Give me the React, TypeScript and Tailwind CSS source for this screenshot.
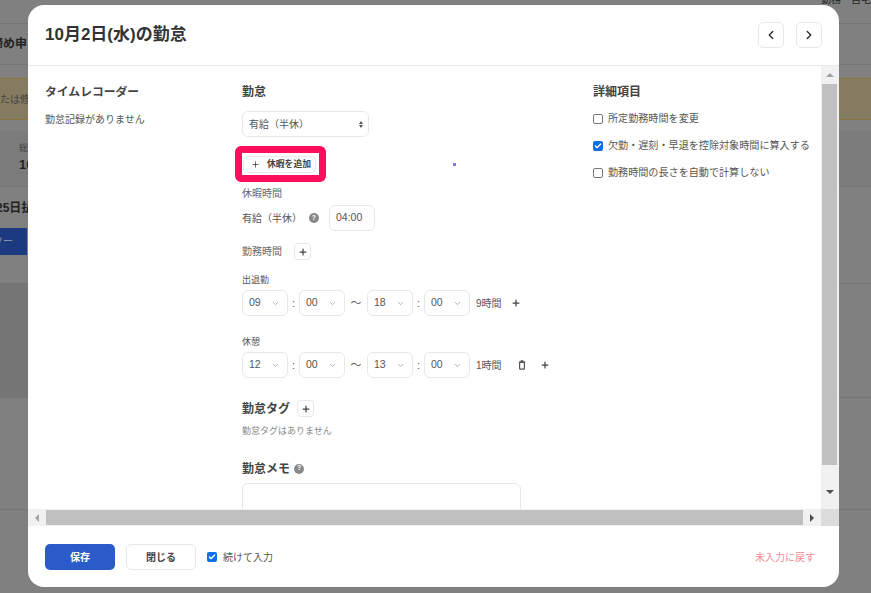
import { ChevronDown, ChevronLeft, ChevronRight, Plus, Check } from 'lucide-react';

const font = "font-['Liberation_Sans','Noto_Sans_CJK_JP',sans-serif]";

function TimeSelect({ value }: { value: string }) {
  return (
    <div className="flex h-[26px] w-[46px] items-center justify-between rounded-[6px] border border-[#e8e8e8] bg-white pl-[6px] pr-[7px] text-[10.5px] text-[#555]">
      <span>{value}</span>
      <ChevronDown size={9} strokeWidth={2} className="text-[#999]" />
    </div>
  );
}

function TrashIcon() {
  return (
    <svg width="10" height="10" viewBox="0 0 10 10" fill="none" stroke="#555" strokeWidth="1.2" className="ml-[15px]">
      <path d="M3.6 .8h2.8M1.8 2.2h6.4" />
      <rect x="2.6" y="2.4" width="4.8" height="6.8" rx=".6" />
    </svg>
  );
}

function TimeRow({ from, to, total, trash }: { from: string; to: string; total: string; trash?: boolean }) {
  return (
    <div className="flex h-[26px] items-center">
      <TimeSelect value={from} />
      <span className="w-[11px] text-center text-[11px] text-[#555]">:</span>
      <TimeSelect value="00" />
      <span className="w-[22px] text-center text-[11px] text-[#555]">〜</span>
      <TimeSelect value={to} />
      <span className="w-[11px] text-center text-[11px] text-[#555]">:</span>
      <TimeSelect value="00" />
      <span className="ml-[6px] text-[10px] text-[#555]">{total}</span>
      {trash && <TrashIcon />}
      <Plus size={10} strokeWidth={3} className={trash ? 'ml-[13px] text-[#444]' : 'ml-[9px] text-[#444]'} />
    </div>
  );
}

function Help() {
  return (
    <span className="flex h-[10px] w-[10px] items-center justify-center rounded-full bg-[#888] text-[7px] font-bold text-white">?</span>
  );
}

function SmallPlus() {
  return (
    <div className="flex h-[17px] w-[17px] items-center justify-center rounded-[4px] border border-[#e8e8e8] bg-white">
      <Plus size={10} strokeWidth={3} className="text-[#444]" />
    </div>
  );
}

function CheckRow({ label, checked }: { label: string; checked?: boolean }) {
  return (
    <div className="flex h-[13px] items-center gap-[5px] text-[10.1px] text-[#555]">
      {checked ? (
        <span className="flex h-[10px] w-[10px] items-center justify-center rounded-[2px] bg-[#0b6fe8]">
          <Check size={8} strokeWidth={4} className="text-white" />
        </span>
      ) : (
        <span className="h-[10px] w-[10px] rounded-[2px] border border-[#777] bg-white" />
      )}
      <span>{label}</span>
    </div>
  );
}

export default function App() {
  return (
    <div className={`${font} relative h-[593px] w-[871px] overflow-hidden bg-[#808080]`}>
      {/* dimmed page behind the dialog */}
      <div className="flex h-full flex-col">
        <div className="flex h-[24px] justify-end border-b border-[#747474] text-[10px] text-[#222]">
          <span className="-mt-[8px] whitespace-nowrap">勤務・自宅</span>
        </div>
        <div className="flex h-[41px] items-center border-b border-[#747474] text-[12px] font-bold text-[#222]">
          <span className="-ml-[9px] whitespace-nowrap">締め申</span>
        </div>
        <div className="mt-[13px] flex h-[42px] items-center border-y border-[#8a7440] bg-[#857b60] text-[10px] text-[#444]">
          たは修
        </div>
        <div className="mt-[11px] h-[56px] border-b border-[#747474] bg-[#7b7b7b] pl-[19px] pt-[11px] text-[#222]">
          <div className="text-[9px] leading-[12px] text-[#444]">総</div>
          <div className="mt-[3px] text-[13px] font-bold leading-[16px]">10</div>
        </div>
        <div className="flex h-[41px] items-center text-[12px] font-bold text-[#222]">
          <span className="-ml-[4px] whitespace-nowrap">25日払</span>
        </div>
        <div className="flex h-[27px] w-[27px] items-center overflow-hidden bg-[#1b3a80] text-[10px] text-[#99a]">
          <span className="-ml-[7px] whitespace-nowrap">ソー</span>
        </div>
        <div className="mt-[28px] h-[115px] border-y border-[#747474]">
          <div className="h-full w-[100px] bg-[#757575]" />
        </div>
        <div className="h-[112px] border-b border-[#747474]" />
      </div>

      {/* dialog */}
      <div className="absolute left-[28px] top-[5px] flex h-[582px] w-[811px] flex-col overflow-hidden rounded-[16px] bg-white">
        <header className="flex h-[61px] shrink-0 items-center justify-between border-b border-[#e8e8e8] pb-[1px] pl-[17px] pr-[17px]">
          <h1 className="mt-[1px] text-[17px] font-bold text-[#333]">10月2日(水)の勤怠</h1>
          <div className="flex gap-[12px]">
            <button className="flex h-[26px] w-[26px] items-center justify-center rounded-[5px] border border-[#e8e8e8]">
              <ChevronLeft size={14} strokeWidth={2.5} className="text-[#333]" />
            </button>
            <button className="flex h-[26px] w-[26px] items-center justify-center rounded-[5px] border border-[#e8e8e8]">
              <ChevronRight size={14} strokeWidth={2.5} className="text-[#333]" />
            </button>
          </div>
        </header>

        <div className="relative flex min-h-0 flex-1">
          <div className="flex min-w-0 flex-1 flex-col">
            <div className="flex min-h-0 flex-1 overflow-hidden pt-[18px]">
              <section className="ml-[17px] w-[197px] shrink-0">
                <h2 className="text-[11.8px] font-bold leading-[17px] text-[#444]">タイムレコーダー</h2>
                <p className="mt-[12px] text-[10px] leading-[14px] text-[#555]">勤怠記録がありません</p>
              </section>

              <section className="w-[351px] shrink-0">
                <h2 className="text-[12px] font-bold leading-[17px] text-[#444]">勤怠</h2>
                <div className="mt-[10px] flex h-[26px] w-[127px] items-center justify-between rounded-[6px] border border-[#e8e8e8] pl-[6px] pr-[5px] text-[10px] text-[#555]">
                  <span>有給（半休）</span>
                  <span className="flex flex-col gap-[1px]">
                    <span className="h-0 w-0 border-x-[2px] border-b-[3px] border-x-transparent border-b-[#555]" />
                    <span className="h-0 w-0 border-x-[2px] border-t-[3px] border-x-transparent border-t-[#555]" />
                  </span>
                </div>

                <div className="relative mt-[19px] h-[17px]">
                  <div className="ml-[1px] flex h-[17px] w-[73px] items-center gap-[7px] rounded-[4px] border border-[#e8e8e8] pl-[7px] text-[8.8px] font-bold text-[#444]">
                    <Plus size={9} strokeWidth={2} className="text-[#333]" />
                    <span>休暇を追加</span>
                  </div>
                  <div className="absolute -left-[7px] -top-[10px] h-[36px] w-[91px] rounded-[6px] border-[7px] border-[#ff0f5b]" />
                </div>

                <p className="mt-[14px] text-[10px] leading-[14px] text-[#666]">休暇時間</p>
                <div className="mt-[4px] flex h-[26px] items-center text-[10px] text-[#555]">
                  <span className="w-[56px] whitespace-nowrap">有給（半休）</span>
                  <span className="ml-[11px]"><Help /></span>
                  <div className="ml-[10px] flex h-[26px] w-[46px] items-center rounded-[6px] border border-[#e8e8e8] pl-[6px] text-[10.5px]">04:00</div>
                </div>

                <div className="mt-[12px] flex h-[17px] items-center gap-[12px] text-[10px] text-[#666]">
                  <span>勤務時間</span>
                  <SmallPlus />
                </div>

                <p className="mt-[14px] text-[9px] leading-[13px] text-[#555]">出退勤</p>
                <div className="mt-[3px]"><TimeRow from="09" to="18" total="9時間" /></div>
                <p className="mt-[20px] text-[9px] leading-[13px] text-[#555]">休憩</p>
                <div className="mt-[3px]"><TimeRow from="12" to="13" total="1時間" trash /></div>

                <div className="mt-[22px] flex h-[17px] items-center gap-[7px] text-[12px] font-bold text-[#444]">
                  <span>勤怠タグ</span>
                  <SmallPlus />
                </div>
                <p className="mt-[8px] text-[9px] leading-[13px] text-[#888]">勤怠タグはありません</p>

                <div className="mt-[22px] flex h-[17px] items-center gap-[4px] text-[12px] font-bold text-[#444]">
                  <span>勤怠メモ</span>
                  <Help />
                </div>
                <div className="mt-[6px] h-[40px] w-[279px] rounded-[6px] border border-[#e8e8e8]" />
              </section>

              <section className="w-[230px] shrink-0">
                <h2 className="text-[12px] font-bold leading-[17px] text-[#444]">詳細項目</h2>
                <div className="mt-[11px] flex flex-col gap-[14px]">
                  <CheckRow label="所定勤務時間を変更" />
                  <CheckRow label="欠勤・遅刻・早退を控除対象時間に算入する" checked />
                  <CheckRow label="勤務時間の長さを自動で計算しない" />
                </div>
              </section>
            </div>

            {/* horizontal scrollbar */}
            <div className="flex h-[17px] shrink-0 items-center bg-[#f1f1f1]">
              <div className="flex h-[17px] w-[18px] items-center justify-center">
                <span className="h-0 w-0 border-y-[4px] border-r-[4px] border-y-transparent border-r-[#a3a3a3]" />
              </div>
              <div className="h-[15px] flex-1 bg-[#c0c0c0]" />
              <div className="flex h-[17px] w-[18px] items-center justify-center">
                <span className="h-0 w-0 border-y-[4px] border-l-[4px] border-y-transparent border-l-[#505050]" />
              </div>
            </div>
          </div>

          {/* vertical scrollbar */}
          <div className="flex w-[18px] shrink-0 flex-col bg-[#f1f1f1]">
            <div className="flex h-[18px] items-center justify-center">
              <span className="h-0 w-0 border-x-[4px] border-b-[4px] border-x-transparent border-b-[#a3a3a3]" />
            </div>
            <div className="ml-[1px] h-[381px] w-[15px] bg-[#c0c0c0]" />
            <div className="flex-1" />
            <div className="flex h-[34px] items-center justify-center">
              <span className="h-0 w-0 border-x-[4px] border-t-[4px] border-x-transparent border-t-[#505050]" />
            </div>
            <div className="h-[17px] bg-[#dcdcdc]" />
          </div>

          <span className="absolute left-[425px] top-[97px] h-[3px] w-[3px] bg-[#7a7aff]" />
        </div>

        <footer className="flex h-[61px] shrink-0 items-center justify-between pl-[17px] pr-[24px] pt-[1px]">
          <div className="flex items-center">
            <button className="h-[26px] w-[70px] rounded-[5px] bg-[#2a5bc8] text-[10px] font-bold text-white">保存</button>
            <button className="ml-[11px] h-[26px] w-[70px] rounded-[5px] border border-[#e8e8e8] text-[10px] font-bold text-[#444]">閉じる</button>
            <span className="ml-[11px] flex h-[10px] w-[10px] items-center justify-center rounded-[2px] bg-[#0b6fe8]">
              <Check size={8} strokeWidth={4} className="text-white" />
            </span>
            <span className="ml-[6px] text-[10px] text-[#555]">続けて入力</span>
          </div>
          <span className="text-[10px] text-[#f58a96]">未入力に戻す</span>
        </footer>
      </div>
    </div>
  );
}
